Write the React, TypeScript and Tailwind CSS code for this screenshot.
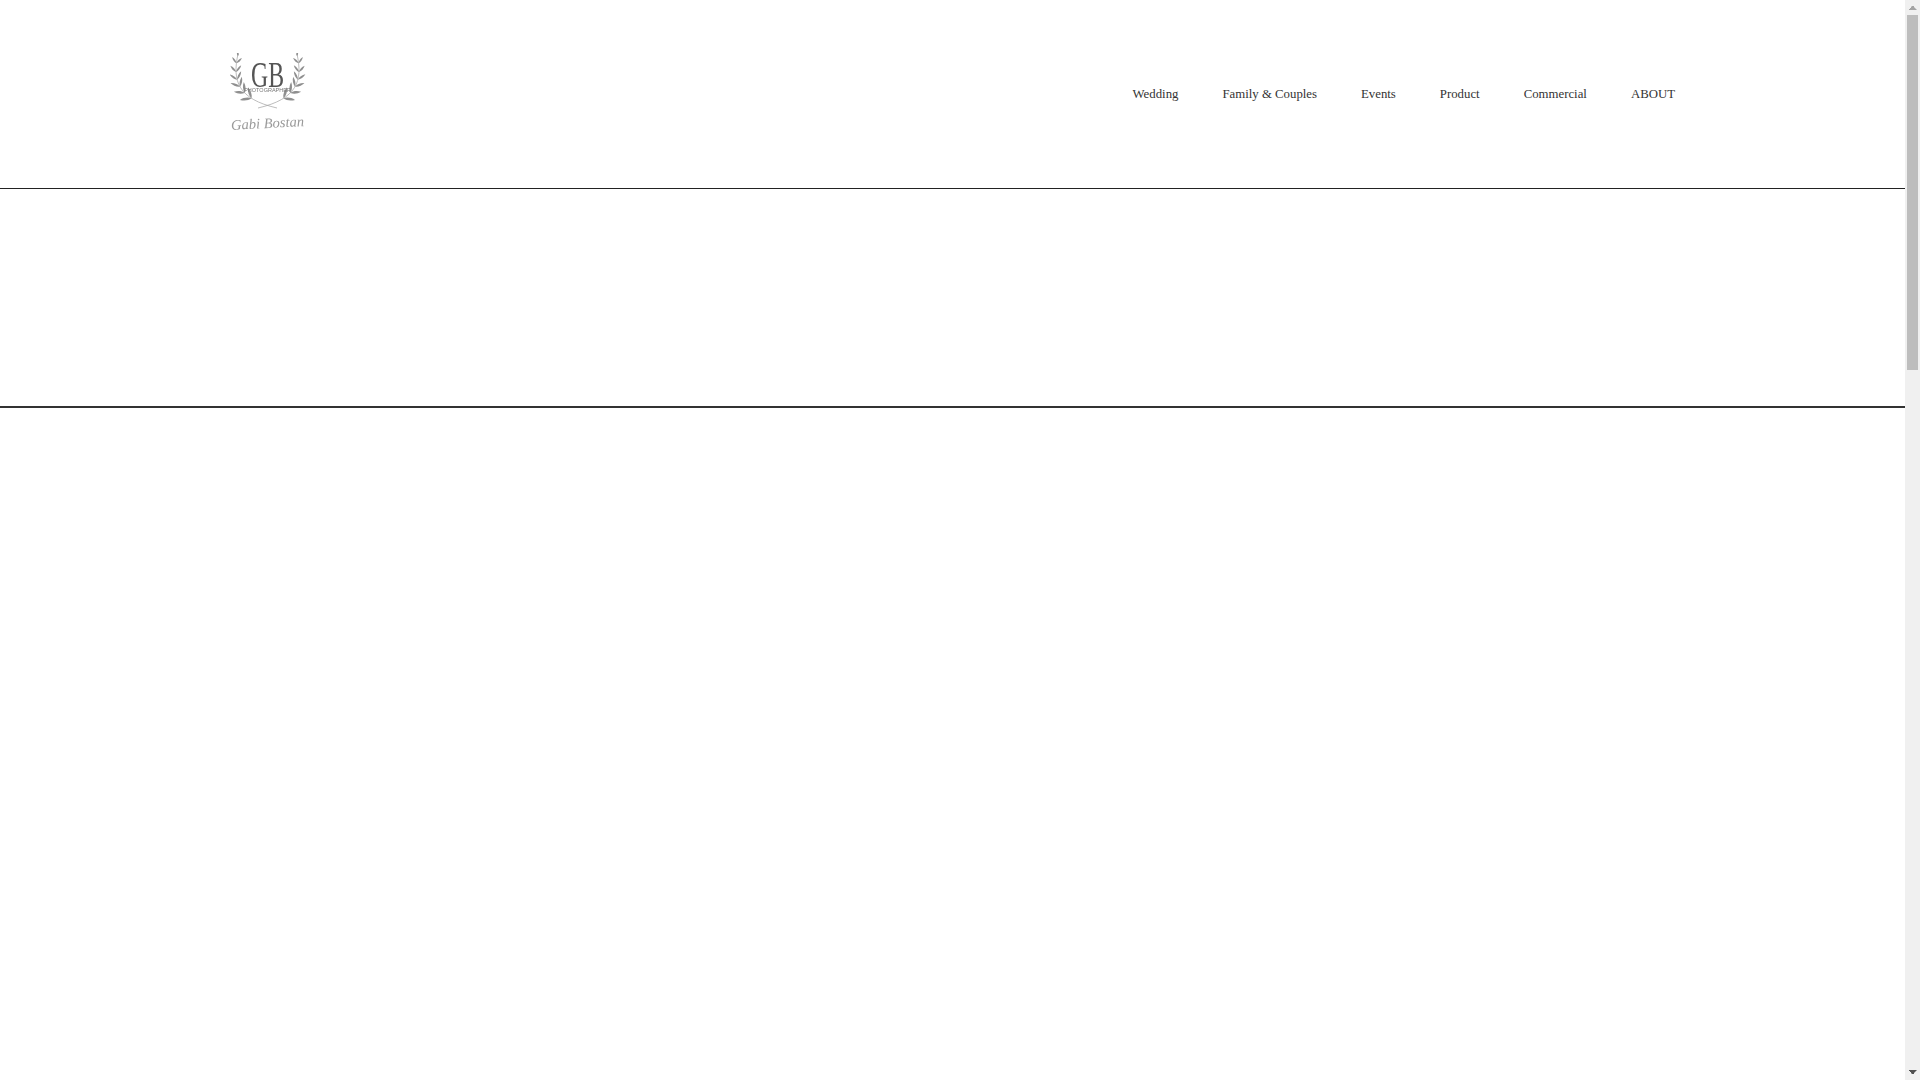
const links = ["Wedding", "Family & Couples", "Events", "Product", "Commercial", "ABOUT"];

const P = [
  [8, 1],
  [2, 28],
  [8, 46],
  [47, 55],
];

function stem(t: number) {
  const u = 1 - t;
  const x = u * u * u * P[0][0] + 3 * u * u * t * P[1][0] + 3 * u * t * t * P[2][0] + t * t * t * P[3][0];
  const y = u * u * u * P[0][1] + 3 * u * u * t * P[1][1] + 3 * u * t * t * P[2][1] + t * t * t * P[3][1];
  const dx = 3 * u * u * (P[1][0] - P[0][0]) + 6 * u * t * (P[2][0] - P[1][0]) + 3 * t * t * (P[3][0] - P[2][0]);
  const dy = 3 * u * u * (P[1][1] - P[0][1]) + 6 * u * t * (P[2][1] - P[1][1]) + 3 * t * t * (P[3][1] - P[2][1]);
  return { x, y, a: (Math.atan2(-dy, -dx) * 180) / Math.PI };
}

const ts = [0.12, 0.24, 0.36, 0.48, 0.6, 0.72];
const leaf = "M0 0C2.5 -1.4 6 -1.4 9 0C6 1.4 2.5 1.4 0 0Z";

function Half() {
  return (
    <g>
      <path d={`M${P[0][0]} ${P[0][1]}C${P[1][0]} ${P[1][1]} ${P[2][0]} ${P[2][1]} ${P[3][0]} ${P[3][1]}`} fill="none" stroke="#a0a0a0" strokeWidth="0.7" />
      {ts.map((t, i) => {
        const { x, y, a } = stem(t);
        const s = 0.85 + i * 0.09;
        return (
          <g key={t} transform={`translate(${x} ${y}) scale(${s})`}>
            <path transform={`rotate(${a - 40})`} d={leaf} fill="#8f8f8f" />
            <path transform={`rotate(${a + 40})`} d={leaf} fill="#8f8f8f" />
          </g>
        );
      })}
      <path transform="translate(8 3) rotate(-95)" d="M0 0C1 -1.2 3 -1.2 5 0C3 1.2 1 1.2 0 0Z" fill="#8f8f8f" />
    </g>
  );
}

function Logo() {
  return (
    <div className="relative w-[76px] h-[82px] blur-[0.4px]">
      <svg viewBox="0 0 76 82" className="w-[76px] h-[82px]">
        <Half />
        <g transform="matrix(-1 0 0 1 75 0)">
          <Half />
        </g>
      </svg>
      <span className="absolute left-0 top-[11px] w-[75px] text-center text-[35px] leading-[23px] text-[#555] scale-x-[0.68] [font-family:'Liberation_Serif',serif]">GB</span>
      <span className="absolute left-0 top-[34px] w-[75px] text-center text-[5.5px] leading-[6px] text-[#777] [font-family:'Liberation_Sans',sans-serif]">PHOTOGRAPHER</span>
      <span className="absolute left-0 top-[60px] w-[75px] text-center text-[14.5px] leading-[20px] italic text-[#9a9a9a] whitespace-nowrap -rotate-3 [font-family:'Liberation_Serif',serif]">Gabi Bostan</span>
    </div>
  );
}

export default function App() {
  return (
    <div className="flex h-screen w-full overflow-hidden bg-white [font-family:'Liberation_Serif',serif]">
      <main className="flex-1 min-w-0">
        <header className="h-[189px] border-b border-[#222] flex items-center pl-[230px] pr-[230px] justify-between">
          <Logo />
          <nav className="flex gap-[44px]">
            {links.map((t) => (
              <a key={t} className="text-[12.8px] leading-[15px] text-[#333] block">
                {t}
              </a>
            ))}
          </nav>
        </header>
        <div className="h-[219px] border-b-2 border-[#333]" />
      </main>
      <aside className="w-[15px] shrink-0 bg-[#f0f0f0] flex flex-col items-center justify-between">
        <div className="flex flex-col items-center w-full">
          <svg viewBox="0 0 15 15" className="w-[15px] h-[15px]"><path d="M4 10H11.5V9H10.5V8H9.5V7H9V6H6.5V7H6V8H5V9H4Z" fill="#a3a3a3" /></svg>
          <div className="w-[11px] h-[355px] bg-[#bdbdbd]" />
        </div>
        <svg viewBox="0 0 15 15" className="w-[15px] h-[15px]"><path d="M4 5H11.5V6H10.5V7H9.5V8H9V9H6.5V8H6V7H5V6H4Z" fill="#505050" /></svg>
      </aside>
    </div>
  );
}
